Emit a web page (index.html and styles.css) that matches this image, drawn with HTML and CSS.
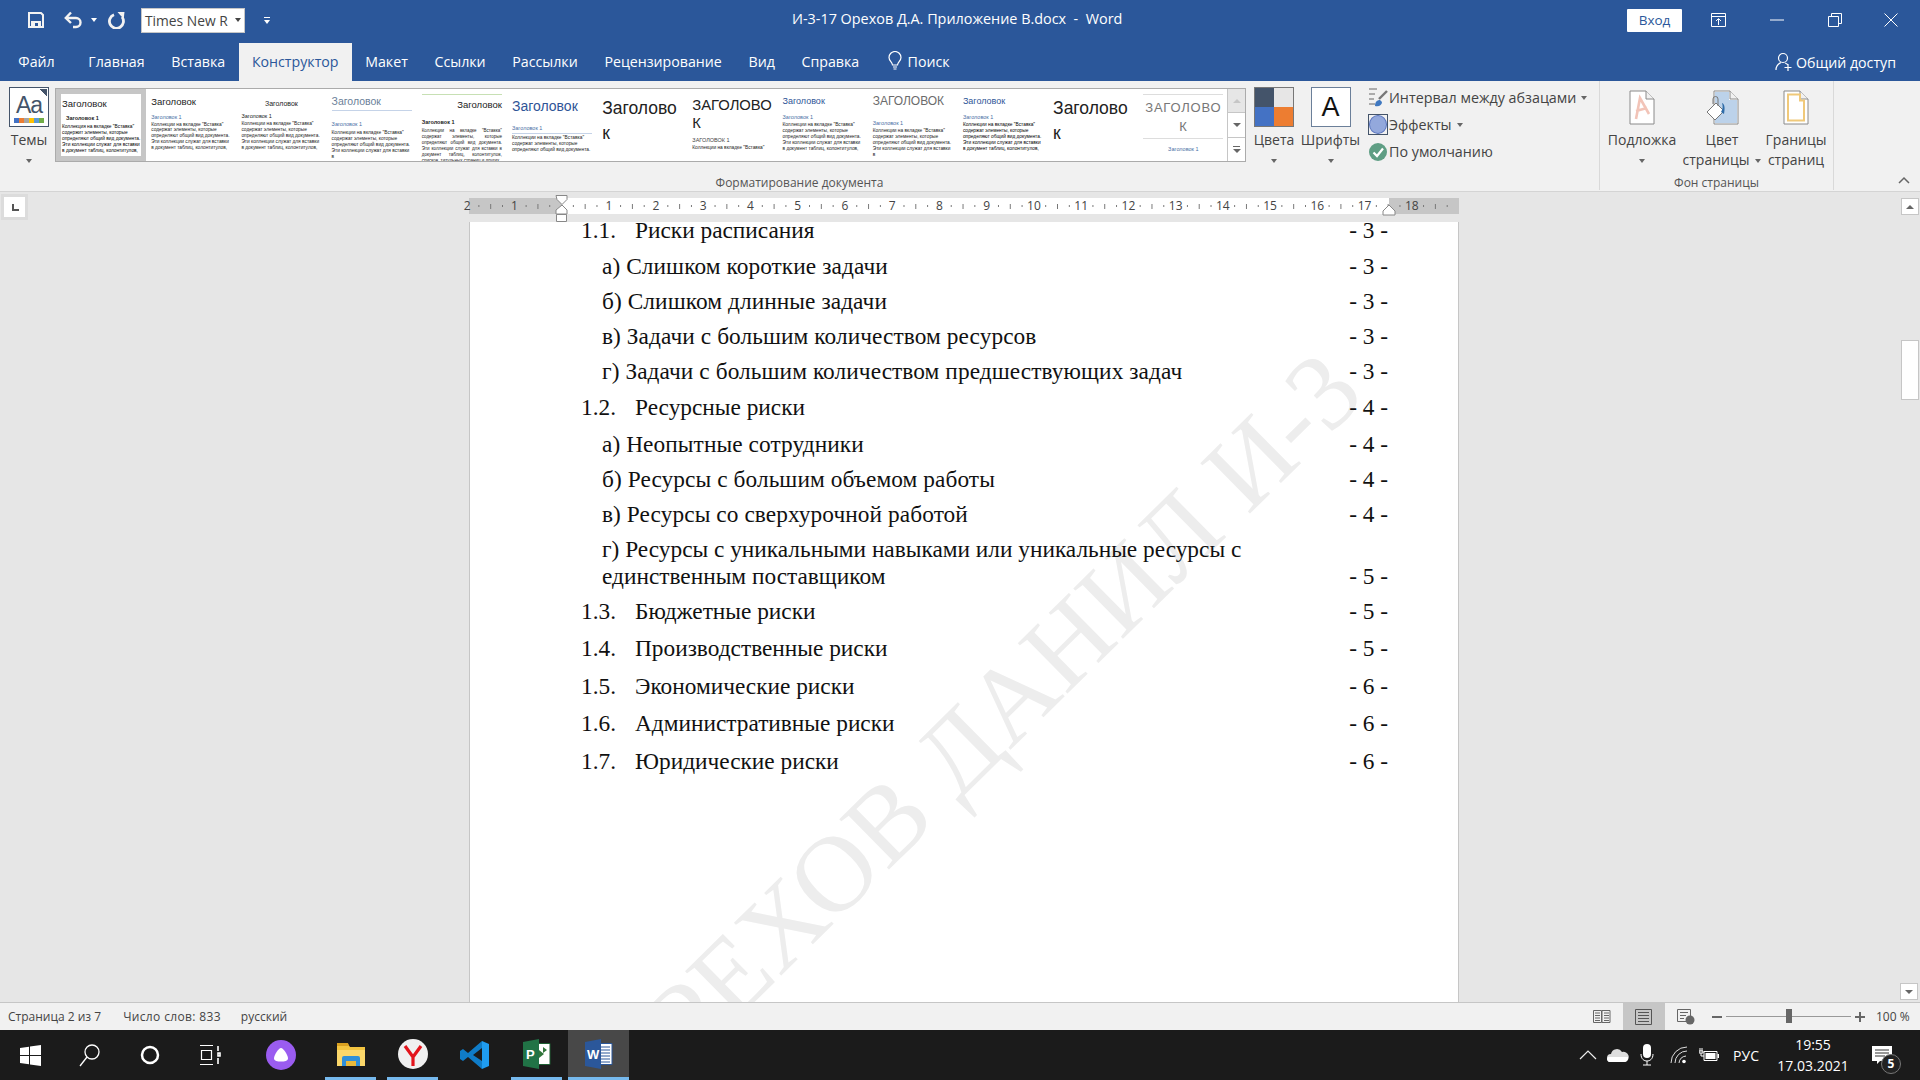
FILE: index.html
```html
<!DOCTYPE html>
<html lang="ru">
<head>
    <meta charset="UTF-8">
    <title>И-3-17 Орехов Д.А. Приложение В.docx - Word</title>
    <link rel="stylesheet" href="styles.css">
</head>
<body>
    <!-- title bar -->
    <div class="titlebar">
        <div class="qat">
            <svg class="qat-save" width="18" height="18" viewBox="0 0 18 18"><path d="M2 2h12l2 2v12H2z" fill="none" stroke="#f2f2f2" stroke-width="2"/><path d="M4 10h10v6H4z" fill="#f2f2f2"/><path d="M8 12h3v3H8z" fill="#2b579a"/></svg>
            <svg class="qat-undo" width="20" height="18" viewBox="0 0 20 18"><path d="M2.500 7H12a4.500 4.500 0 0 1 0 9H9" fill="none" stroke="#f2f2f2" stroke-width="2.4"/><path d="M7 1.500L1.800 7 7 12" fill="none" stroke="#f2f2f2" stroke-width="2.4"/></svg>
            <span class="caret caret-white qat-caret"></span>
            <svg class="qat-redo" width="18" height="18" viewBox="0 0 18 18"><path d="M6 3.700A7 7 0 1 0 14 6" fill="none" stroke="#f2f2f2" stroke-width="2.800"/><path d="M9.500 1h7l-.8 7z" fill="#f2f2f2"/></svg>
            <div class="font-combo"><span>Times New R</span><span class="caret caret-dark"></span></div>
            <svg class="qat-custom" width="9" height="9" viewBox="0 0 9 9"><path d="M1 1h6v1H1z M1 4h6L4 8z" fill="#fff"/></svg>
        </div>
        <div class="doc-title">И-3-17 Орехов Д.А. Приложение В.docx&nbsp; -&nbsp; Word</div>
        <div class="win-controls">
            <button class="login">Вход</button>
            <svg class="wc wc-ribbon" width="16" height="14" viewBox="0 0 16 14"><path d="M.5.500h14v13H.5z M.5 3.500h14 M7.500 12V6 M5 8l2.500-2.500L10 8" fill="none" stroke="#fff"/></svg>
            <svg class="wc wc-min" width="14" height="2" viewBox="0 0 14 2"><path d="M0 1h14" stroke="#fff"/></svg>
            <svg class="wc wc-max" width="14" height="14" viewBox="0 0 14 14"><path d="M.5 3.500h10v10H.5z M3.500 3.500v-3h10v10h-3" fill="none" stroke="#fff"/></svg>
            <svg class="wc wc-close" width="14" height="14" viewBox="0 0 14 14"><path d="M.5.500l13 13M13.500.500l-13 13" stroke="#fff"/></svg>
        </div>
    </div>

    <!-- tabs -->
    <div class="tabs">
        <span class="tab tab-file">Файл</span>
        <span class="tab">Главная</span>
        <span class="tab">Вставка</span>
        <span class="tab tab-active">Конструктор</span>
        <span class="tab">Макет</span>
        <span class="tab">Ссылки</span>
        <span class="tab">Рассылки</span>
        <span class="tab">Рецензирование</span>
        <span class="tab">Вид</span>
        <span class="tab">Справка</span>
        <span class="tab tab-search">
            <svg width="14" height="20" viewBox="0 0 14 20"><path d="M4.500 14c0-3-3.500-4-3.500-7.500a6 6 0 0 1 12 0C13 10 9.500 11 9.500 14z M5 16h4 M5.500 18h3" fill="none" stroke="#fff" stroke-width="1.200"/></svg>
            Поиск
        </span>
        <span class="share">
            <svg width="18" height="20" viewBox="0 0 18 20"><circle cx="8" cy="6" r="4.500" fill="none" stroke="#fff" stroke-width="1.200"/><path d="M1 18c0-4 2-6 5-7.500 M10 11c1 .3 2 1 2.500 1.500 M13 12v7 M9.500 15.500h7" fill="none" stroke="#fff" stroke-width="1.200"/></svg>
            Общий доступ
        </span>
    </div>

    <!-- ribbon -->
    <div class="ribbon">
        <div class="group group-format">
            <div class="group-body">
                <div class="big-btn themes-btn">
                    <div class="themes-icon">
                        <span class="themes-aa">Aa</span>
                        <span class="themes-colors"><i class="c1"></i><i class="c2"></i><i class="c3"></i><i class="c4"></i><i class="c5"></i><i class="c6"></i></span>
                    </div>
                    <span class="big-label">Темы</span>
                    <span class="caret caret-grey"></span>
                </div>
                <div class="gallery">
                    <div class="styles">
                        <div class="style style-selected s-plain">
                            <div class="s-head">Заголовок</div>
                            <div class="s-h1 s-bold">Заголовок 1</div>
                            <p class="s-body s-strong">Коллекция на вкладке "Вставка" содержит элементы, которые определяют общий вид документа. Эти коллекции служат для вставки в документ таблиц, колонтитулов,</p>
                        </div>
                        <div class="style s-blue1">
                            <div class="s-head">Заголовок</div>
                            <div class="s-h1">Заголовок 1</div>
                            <p class="s-body">Коллекции на вкладке "Вставка" содержат элементы, которые определяют общий вид документа. Эти коллекции служат для вставки в документ таблиц, колонтитулов,</p>
                        </div>
                        <div class="style s-center">
                            <div class="s-head">Заголовок</div>
                            <div class="s-h1">Заголовок 1</div>
                            <p class="s-body">Коллекции на вкладке "Вставка" содержат элементы, которые определяют общий вид документа. Эти коллекции служат для вставки в документ таблиц, колонтитулов,</p>
                        </div>
                        <div class="style s-rule">
                            <div class="s-head">Заголовок</div>
                            <div class="s-h1">Заголовок 1</div>
                            <p class="s-body">Коллекции на вкладке "Вставка" содержат элементы, которые определяют общий вид документа. Эти коллекции служат для вставки в</p>
                        </div>
                        <div class="style s-green">
                            <div class="s-head">Заголовок</div>
                            <div class="s-h1">Заголовок 1</div>
                            <p class="s-body">Коллекции на вкладке "Вставка" содержат элементы, которые определяют общий вид документа. Эти коллекции служат для вставки в документ таблиц, колонтитулов, списков, титульных страниц и других</p>
                        </div>
                        <div class="style s-bigblue">
                            <div class="s-head">Заголовок</div>
                            <div class="s-h1">Заголовок 1</div>
                            <p class="s-body">Коллекции на вкладке "Вставка" содержат элементы, которые определяют общий вид документа.</p>
                        </div>
                        <div class="style s-huge">
                            <div class="s-head">Заголовок</div>
                        </div>
                        <div class="style s-caps">
                            <div class="s-head">ЗАГОЛОВОК</div>
                            <div class="s-h1">ЗАГОЛОВОК 1</div>
                            <p class="s-body">Коллекции на вкладке "Вставка"</p>
                        </div>
                        <div class="style s-blue2">
                            <div class="s-head">Заголовок</div>
                            <div class="s-h1">Заголовок 1</div>
                            <p class="s-body">Коллекции на вкладке "Вставка" содержат элементы, которые определяют общий вид документа. Эти коллекции служат для вставки в документ таблиц, колонтитулов,</p>
                        </div>
                        <div class="style s-capsline">
                            <div class="s-head">ЗАГОЛОВОК</div>
                            <div class="s-h1">Заголовок 1</div>
                            <p class="s-body">Коллекции на вкладке "Вставка" содержат элементы, которые определяют общий вид документа. Эти коллекции служат для вставки в</p>
                        </div>
                        <div class="style s-blue2 s-dense">
                            <div class="s-head">Заголовок</div>
                            <div class="s-h1">Заголовок 1</div>
                            <p class="s-body">Коллекции на вкладке "Вставка" содержат элементы, которые определяют общий вид документа. Эти коллекции служат для вставки в документ таблиц, колонтитулов,</p>
                        </div>
                        <div class="style s-huge s-huge2">
                            <div class="s-head">Заголовок</div>
                        </div>
                        <div class="style s-boxed">
                            <div class="s-head">ЗАГОЛОВОК</div>
                            <div class="s-h1">Заголовок 1</div>
                        </div>
                    </div>
                    <div class="gallery-scroll">
                        <span class="gs gs-up"><i class="tri-up"></i></span>
                        <span class="gs gs-down"><i class="tri-down"></i></span>
                        <span class="gs gs-more"><b></b><i class="tri-down"></i></span>
                    </div>
                </div>
                <div class="big-btn colors-btn">
                    <div class="colors-icon"><i class="q1"></i><i class="q2"></i><i class="q3"></i><i class="q4"></i></div>
                    <span class="big-label">Цвета</span>
                    <span class="caret caret-grey"></span>
                </div>
                <div class="big-btn fonts-btn">
                    <div class="fonts-icon">A</div>
                    <span class="big-label">Шрифты</span>
                    <span class="caret caret-grey"></span>
                </div>
                <div class="mini-list">
                    <div class="mini-row">
                        <svg width="20" height="22" viewBox="0 0 20 22"><path d="M1 2h8M1 7h6M1 12h5M1 17h6" stroke="#666"/><path d="M19 4L11 12" stroke="#777" stroke-width="2.400"/><path d="M7 19c0-4 2-6 5-6l2 2c0 3-3 5-7 4z" fill="#3f78c0"/></svg>
                        <span>Интервал между абзацами</span><span class="caret caret-grey"></span>
                    </div>
                    <div class="mini-row">
                        <span class="effects-icon"><i></i></span>
                        <span>Эффекты</span><span class="caret caret-grey"></span>
                    </div>
                    <div class="mini-row">
                        <svg width="20" height="20" viewBox="0 0 20 20"><circle cx="10" cy="10" r="9" fill="#5f9e84"/><path d="M5.500 10.500l3.500 3.500 6-7.500" fill="none" stroke="#fff" stroke-width="2.200"/></svg>
                        <span>По умолчанию</span>
                    </div>
                </div>
            </div>
            <div class="group-label">Форматирование документа</div>
        </div>
        <div class="group group-page">
            <div class="group-body">
                <div class="page-btn btn-watermark">
                    <svg width="26" height="35" viewBox="0 0 26 35"><path d="M1 1h16l8 8v25H1z" fill="#fff" stroke="#8a8a8a"/><path d="M17 1v8h8" fill="#f1f1f1" stroke="#8a8a8a"/><path d="M7 29L11 8l9 16M7 21l11-3" fill="none" stroke="#f2c4b8" stroke-width="2.600"/></svg>
                    <span class="btn-text">Подложка</span>
                    <span class="caret caret-grey"></span>
                </div>
                <div class="page-btn btn-color">
                    <svg width="33" height="35" viewBox="0 0 33 35"><path d="M8 1h16l8 8v25H8z" fill="#fff" stroke="#8a8a8a"/><path d="M9 2h14v8h8v23H9z" fill="#bcd2ea"/><path d="M24 1v8h8" fill="#f1f1f1" stroke="#8a8a8a"/><path d="M1 22l9-9 8 8-9 9z" fill="#fff" stroke="#777"/><path d="M7 14V9a2.500 2.500 0 0 1 5 0v7" fill="none" stroke="#777"/><path d="M16 13c3 1 3 6 2 11l-3-2c2-3 2-6 1-9z" fill="#2f6ca8"/></svg>
                    <span class="btn-text">Цвет</span>
                    <span class="btn-text">страницы<span class="caret caret-grey caret-inline"></span></span>
                </div>
                <div class="page-btn btn-border">
                    <svg width="26" height="35" viewBox="0 0 26 35"><path d="M1 1h16l8 8v25H1z" fill="#fff" stroke="#8a8a8a"/><path d="M17 1v8h8" fill="#f1f1f1" stroke="#8a8a8a"/><path d="M5 4.500h12v6h4v20H5z" fill="none" stroke="#f0c97a" stroke-width="2"/></svg>
                    <span class="btn-text">Границы</span>
                    <span class="btn-text">страниц</span>
                </div>
            </div>
            <div class="group-label">Фон страницы</div>
        </div>
        <svg class="collapse" width="12" height="8" viewBox="0 0 12 8"><path d="M1 7l5-5 5 5" fill="none" stroke="#666" stroke-width="1.500"/></svg>
    </div>

    <!-- ruler -->
    <div class="ruler-row">
        <div class="tab-stop"><i></i></div>
        <div class="ruler">
            <div class="ruler-nums">
                <span>2</span><span>1</span><span></span><span>1</span><span>2</span><span>3</span><span>4</span><span>5</span><span>6</span><span>7</span><span>8</span><span>9</span><span>10</span><span>11</span><span>12</span><span>13</span><span>14</span><span>15</span><span>16</span><span>17</span><span>18</span>
            </div>
            <svg class="marker marker-left" width="14" height="28" viewBox="0 0 14 28"><path d="M1 .5h11v4l-5 5-5-5zM7 10l5 5v4H1v-4z" fill="#fff" stroke="#888"/><path d="M1.500 19.500h10v7h-10z" fill="#fff" stroke="#888"/></svg>
            <svg class="marker marker-right" width="14" height="12" viewBox="0 0 14 12"><path d="M7 1l6 6v4H1V7z" fill="#fff" stroke="#888"/></svg>
        </div>
        <div class="scroll-btn"><i class="tri-up"></i></div>
    </div>

    <!-- document -->
    <div class="workspace">
        <div class="page">
            <div class="watermark">ОРЕХОВ ДАНИЛ И-3</div>
            <div class="toc">
                <div class="row sec first"><span class="num">1.1.</span><span class="name">Риски расписания</span><span class="pg">- 3 -</span></div>
                <div class="row sub"><span class="name">а) Слишком короткие задачи</span><span class="pg">- 3 -</span></div>
                <div class="row sub"><span class="name">б) Слишком длинные задачи</span><span class="pg">- 3 -</span></div>
                <div class="row sub"><span class="name">в) Задачи с большим количеством ресурсов</span><span class="pg">- 3 -</span></div>
                <div class="row sub"><span class="name">г) Задачи с большим количеством предшествующих задач</span><span class="pg">- 3 -</span></div>
                <div class="row sec"><span class="num">1.2.</span><span class="name">Ресурсные риски</span><span class="pg">- 4 -</span></div>
                <div class="row sub"><span class="name">а) Неопытные сотрудники</span><span class="pg">- 4 -</span></div>
                <div class="row sub"><span class="name">б) Ресурсы с большим объемом работы</span><span class="pg">- 4 -</span></div>
                <div class="row sub"><span class="name">в) Ресурсы со сверхурочной работой</span><span class="pg">- 4 -</span></div>
                <div class="row sub row-wrap"><span class="name">г) Ресурсы с уникальными навыками или уникальные ресурсы с единственным поставщиком</span><span class="pg">- 5 -</span></div>
                <div class="row sec"><span class="num">1.3.</span><span class="name">Бюджетные риски</span><span class="pg">- 5 -</span></div>
                <div class="row sec"><span class="num">1.4.</span><span class="name">Производственные риски</span><span class="pg">- 5 -</span></div>
                <div class="row sec"><span class="num">1.5.</span><span class="name">Экономические риски</span><span class="pg">- 6 -</span></div>
                <div class="row sec"><span class="num">1.6.</span><span class="name">Административные риски</span><span class="pg">- 6 -</span></div>
                <div class="row sec"><span class="num">1.7.</span><span class="name">Юридические риски</span><span class="pg">- 6 -</span></div>
            </div>
        </div>
        <div class="vscroll">
            <div class="vthumb"></div>
            <div class="scroll-btn scroll-down"><i class="tri-down"></i></div>
        </div>
    </div>

    <!-- status bar -->
    <div class="statusbar">
        <span class="st-page">Страница 2 из 7</span>
        <span class="st-words">Число слов: 833</span>
        <span class="st-lang">русский</span>
        <div class="st-right">
            <span class="view">
                <svg width="18" height="16" viewBox="0 0 18 16"><path d="M.5 1.500h8v12h-8zM9 1.500h8v12H9zM2 4h5M2 6.500h5M2 9h5M2 11.500h5M11 4h5M11 6.500h5M11 9h5M11 11.500h5" fill="none" stroke="#666"/></svg>
            </span>
            <span class="view view-active">
                <svg width="18" height="16" viewBox="0 0 18 16"><path d="M.5.500h16v15H.5zM3 3.500h11M3 6.500h11M3 9.500h11M3 12.500h11" fill="none" stroke="#555"/></svg>
            </span>
            <span class="view">
                <svg width="18" height="16" viewBox="0 0 18 16"><path d="M.5.500h13v12H.5zM3 3.500h8M3 6.500h6M3 9.500h4" fill="none" stroke="#666"/><circle cx="13" cy="11" r="4.500" fill="#666"/></svg>
            </span>
            <span class="zoom-minus"></span>
            <div class="slider"><i></i></div>
            <span class="zoom-plus"></span>
            <span class="zoom-val">100 %</span>
        </div>
    </div>

    <!-- taskbar -->
    <div class="taskbar">
        <div class="task task-sys">
            <svg width="21" height="21" viewBox="0 0 21 21"><path d="M0 3l9-1.300V10H0zM10 1.500L21 0v10H10zM0 11h9v8.300L0 18zM10 11h11v10l-11-1.500z" fill="#fff"/></svg>
        </div>
        <div class="task task-sys">
            <svg width="22" height="24" viewBox="0 0 22 24"><circle cx="13" cy="9" r="7" fill="none" stroke="#fff" stroke-width="1.300"/><path d="M8 14L1 23" stroke="#fff" stroke-width="1.300"/></svg>
        </div>
        <div class="task task-sys">
            <svg width="20" height="20" viewBox="0 0 20 20"><circle cx="10" cy="10" r="8" fill="none" stroke="#fff" stroke-width="2.500"/></svg>
        </div>
        <div class="task task-sys">
            <svg width="22" height="20" viewBox="0 0 22 20"><path d="M1 .5h13M2.500 5.500h10v9h-10zM1 19.500h13" fill="none" stroke="#fff" stroke-width="1.200"/><path d="M19 1v5M19 8h2v3h-2zM19 13v6" fill="none" stroke="#fff" stroke-width="1.600"/></svg>
        </div>
        <div class="task task-alice">
            <svg width="30" height="30" viewBox="0 0 30 30"><circle cx="15" cy="15" r="15" fill="#9a5cf0"/><path d="M15 8c2.500 0 7 7 7 10.500 0 2.500-3.500 3-7 3s-7-.5-7-3C8 15 12.500 8 15 8z" fill="#fff"/></svg>
        </div>
        <div class="task task-open task-explorer">
            <svg width="28" height="24" viewBox="0 0 28 24"><path d="M0 2h11l2 3h15v19H0z" fill="#f3c440"/><path d="M0 1h11l1 3H0z" fill="#d9a020"/><path d="M0 8h28v16H0z" fill="#fbd76a"/><path d="M5 24v-8q0-2 2-2h14q2 0 2 2v8h-4v-5H9v5z" fill="#2f8fd8"/><path d="M9 19h10v5H9z" fill="#e8b93a"/></svg>
        </div>
        <div class="task task-open">
            <svg width="30" height="30" viewBox="0 0 30 30"><circle cx="15" cy="15" r="15" fill="#f0f0f0"/><path d="M7 7l8 11 8-11M15 18v9" fill="none" stroke="#e3141c" stroke-width="3.200"/></svg>
        </div>
        <div class="task">
            <svg width="30" height="30" viewBox="0 0 30 30"><path d="M22 1L8 13 3 9 0 11v8l3 2 5-4 14 12v-8L13 15l9-7z" fill="#0f7cc8"/><path d="M22 1l7 3v22l-7 3z" fill="#1f9cf0"/></svg>
        </div>
        <div class="task task-open">
            <svg width="28" height="30" viewBox="0 0 28 30"><path d="M12 4.500h15v21H12z" fill="#fff" stroke="#1e5f33"/><path d="M16 11l5 4-5 4zM20 8l4 3-4 3z" fill="#31753b"/><path d="M0 3l16-3v30L0 27z" fill="#217346"/><text x="3" y="20" class="ico-letter">P</text></svg>
        </div>
        <div class="task task-open task-active">
            <svg width="28" height="30" viewBox="0 0 28 30"><path d="M12 4.500h15v21H12z" fill="#fff" stroke="#2b579a"/><path d="M16 8h9M16 11h9M16 14h9M16 17h9M16 20h9M16 23h9" stroke="#2b579a"/><path d="M0 3l16-3v30L0 27z" fill="#2b579a"/><text x="2" y="20" class="ico-letter">W</text></svg>
        </div>
        <div class="tray">
            <svg class="tr-chev" width="18" height="10" viewBox="0 0 18 10"><path d="M1 9l8-8 8 8" fill="none" stroke="#eee" stroke-width="1.200"/></svg>
            <svg class="tr-cloud" width="22" height="14" viewBox="0 0 22 14"><path d="M4 14a4 4 0 0 1 0-8 6 6 0 0 1 11-2 5 5 0 0 1 3 10z" fill="#ddd"/><path d="M1 9h20v1a4 4 0 0 1-4 4H4a3 3 0 0 1-3-5z" fill="#fff"/></svg>
            <svg class="tr-mic" width="14" height="22" viewBox="0 0 14 22"><rect x="3" y="0" width="8" height="14" rx="4" fill="#fff"/><path d="M1 10c0 5 3 7 6 7s6-2 6-7M7 17v4M3 21h8" fill="none" stroke="#fff"/></svg>
            <svg class="tr-wifi" width="18" height="18" viewBox="0 0 18 18"><path d="M1 17A16 16 0 0 1 17 1M5 17A12 12 0 0 1 17 5M9 17a8 8 0 0 1 7-7" fill="none" stroke="#ddd"/><circle cx="14" cy="15.500" r="1.800" fill="#fff"/></svg>
            <svg class="tr-batt" width="20" height="14" viewBox="0 0 20 14"><path d="M5 3.500h13v9H5z" fill="none" stroke="#fff"/><path d="M6.500 5h10v6h-10zM18.500 6h1.500v4h-1.500z" fill="#fff"/><path d="M1 0v3M3 0v3M0 3h4v2H0zM2 5v3h3" fill="none" stroke="#fff"/></svg>
            <span class="tr-lang">РУС</span>
            <div class="tr-clock"><span>19:55</span><span>17.03.2021</span></div>
            <div class="tr-notif">
                <svg width="20" height="18" viewBox="0 0 20 18"><path d="M0 0h20v15H8l-3 3v-3H0z" fill="#fff"/><path d="M3 4h14M3 7h14M3 10h10" stroke="#333"/></svg>
                <span class="badge">5</span>
            </div>
        </div>
    </div>
</body>
</html>
```
FILE: styles.css
```css
* {
    box-sizing: border-box;
}

html, body {
    margin: 0;
    padding: 0;
}

body {
    width: 1920px;
    height: 1080px;
    overflow: hidden;
    display: flex;
    flex-direction: column;
    font-family: 'Open Sans', sans-serif;
    background-color: #e6e6e6;
}

/* carets */
.caret {
    display: inline-block;
    width: 0;
    height: 0;
    border-left: 3.5px solid transparent;
    border-right: 3.5px solid transparent;
    border-top: 4px solid #666;
}

.caret-white { border-top-color: #fff; }
.caret-dark { border-top-color: #444; }
.caret-inline { margin-left: 6px; vertical-align: middle; }

/* title bar */
.titlebar {
    height: 43px;
    flex: none;
    display: flex;
    align-items: center;
    padding-bottom: 3px;
    background-color: #2b579a;
    color: #fff;
    position: relative;
}

.qat {
    display: flex;
    align-items: center;
    padding-left: 27px;
}

.qat-undo { margin-left: 19px; }
.qat-caret { margin-left: 7px; }
.qat-redo { margin-left: 11px; }

.font-combo {
    width: 104px;
    height: 25px;
    margin-left: 15px;
    padding: 0 3px;
    display: flex;
    align-items: center;
    justify-content: space-between;
    background-color: #fff;
    border: 1px solid #c6c6c6;
    color: #444;
    font-size: 13.8px;
    white-space: nowrap;
}

.qat-custom { margin-left: 18px; }

.doc-title {
    position: absolute;
    left: 792px;
    top: 9px;
    font-size: 14.4px;
    white-space: nowrap;
}

.win-controls {
    margin-left: auto;
    display: flex;
    align-items: center;
}

.login {
    width: 55px;
    height: 23px;
    padding: 0;
    border: none;
    border-radius: 1px;
    background-color: #fff;
    color: #2b579a;
    font-family: inherit;
    font-size: 13.5px;
}

.wc-ribbon { margin-left: 29px; }
.wc-min { margin-left: 43px; }
.wc-max { margin-left: 44px; }
.wc-close { margin-left: 42px; margin-right: 22px; }

/* tabs */
.tabs {
    height: 38px;
    flex: none;
    display: flex;
    align-items: stretch;
    padding-left: 5px;
    background-color: #2b579a;
    color: #fff;
    font-size: 14.2px;
}

.tab {
    padding: 0 13.350px 2px;
    display: flex;
    align-items: center;
    gap: 6px;
    white-space: nowrap;
}

.tab-file { margin-right: 7px; }

.tab-active {
    background-color: #f1f1f1;
    color: #2b579a;
}

.tab-search { padding-left: 15px; }

.share {
    margin-left: auto;
    padding-right: 24px;
    display: flex;
    align-items: center;
    gap: 3px;
}

/* ribbon */
.ribbon {
    height: 111px;
    flex: none;
    display: flex;
    position: relative;
    background-color: #f1f1f1;
    border-bottom: 1px solid #d4d4d4;
    color: #444;
}

.group {
    display: flex;
    flex-direction: column;
    border-right: 1px solid #d9d9d9;
    margin-bottom: 1px;
}

.group-format { width: 1600px; }
.group-page { width: 234px; }

.group-body {
    flex: 1;
    display: flex;
    min-height: 0;
}

.group-label {
    height: 15px;
    text-align: center;
    font-size: 12px;
    line-height: 15px;
    color: #555;
}

.big-btn {
    display: flex;
    flex-direction: column;
    align-items: center;
    padding-top: 6px;
}

.big-label {
    font-size: 14px;
    line-height: 19px;
    margin-top: 3px;
}

.big-btn .caret {
    margin-top: 10px;
}

.themes-btn {
    width: 55px;
    flex: none;
    padding-left: 3px;
}

.themes-icon {
    width: 40px;
    height: 40px;
    flex: none;
    border: 1px solid #44546a;
    outline: 1px solid #fff;
    outline-offset: -2px;
    background: linear-gradient(225deg, #44546a 0, #44546a 7px, #fff 7px);
    display: flex;
    flex-direction: column;
    align-items: center;
    font-family: 'Liberation Sans', sans-serif;
}

.themes-aa {
    font-size: 23px;
    line-height: 24px;
    letter-spacing: -1px;
    margin-top: 5px;
    color: #44546a;
}

.themes-colors {
    display: flex;
    margin-top: 1px;
}

.themes-colors i {
    width: 5px;
    height: 5px;
}

.c1 { background-color: #4472c4; }
.c2 { background-color: #ed7d31; }
.c3 { background-color: #a5a5a5; }
.c4 { background-color: #ffc000; }
.c5 { background-color: #5b9bd5; }
.c6 { background-color: #70ad47; }

.gallery {
    width: 1191px;
    height: 74px;
    margin-top: 7px;
    flex: none;
    display: flex;
    background-color: #fff;
    border: 1px solid #ababab;
}

.styles {
    flex: 1;
    display: flex;
    overflow: hidden;
}

.style {
    width: 90.200px;
    flex: none;
    height: 100%;
    padding: 5px 5px 0;
    overflow: hidden;
    font-family: 'Liberation Sans', sans-serif;
    color: #222;
}

.style-selected {
    background-color: #fff;
    border: 5px solid #c6c6c6;
    padding: 0 0 0 1px;
}

.s-head {
    font-size: 9.500px;
    line-height: 15px;
    white-space: nowrap;
}

.s-h1 {
    font-size: 5.500px;
    line-height: 8px;
    margin-top: 3.500px;
}

.s-body {
    margin: 1px 0 0;
    font-size: 4.800px;
    line-height: 5.900px;
}

.style-selected .s-head { margin-top: 1.500px; }
.style-selected .s-body { margin-top: 2px; }
.s-bold { font-weight: bold; margin-left: 4px; }
.s-strong { color: #000; }

.s-blue1 .s-h1 { color: #4a6fa5; }

.s-center .s-head { text-align: center; font-size: 7px; margin-top: 2px; }
.s-center .s-h1 { margin-top: 1px; }

.s-rule .s-head {
    color: #6b7f99;
    font-size: 10.500px;
    line-height: 15px;
    padding-bottom: 1px;
    border-bottom: 1px solid #c5d3e8;
}

.s-rule .s-h1 { margin-top: 9px; color: #4a6fa5; }
.s-rule .s-body { margin-top: 2px; }

.s-green .s-head {
    border-top: 1px solid #c7e0b4;
    text-align: right;
    padding-top: 2px;
}

.s-green .s-h1 { margin-top: 6px; font-weight: bold; }
.s-green .s-body { text-align: justify; margin-top: 2px; font-size: 4.500px; }

.s-bigblue .s-head {
    color: #2f5597;
    font-size: 14px;
    line-height: 20px;
    margin-top: 2px;
}

.s-bigblue .s-h1 {
    color: #4a6fa5;
    margin-top: 8px;
    padding-bottom: 1px;
    border-bottom: 1px solid #c5d3e8;
}

.s-huge .s-head {
    white-space: normal;
    word-break: break-all;
    font-size: 17.500px;
    line-height: 25px;
    margin-top: 1.500px;
}

.s-caps .s-head {
    white-space: normal;
    word-break: break-all;
    font-size: 14.800px;
    line-height: 18px;
    margin-top: 2px;
}

.s-caps .s-h1 { margin-top: 4px; color: #444; }
.s-caps .s-body { margin-top: 1px; }

.s-blue2 .s-head { color: #2f5597; font-size: 9px; }
.s-blue2 .s-h1 { color: #4a6fa5; margin-top: 4px; }
.s-dense .s-body { color: #000; }

.s-capsline .s-head {
    color: #6b6b6b;
    font-size: 12px;
    line-height: 15px;
}

.s-capsline .s-h1 { margin-top: 10px; color: #4a6fa5; }

.s-boxed .s-head {
    white-space: normal;
    word-break: break-all;
    border-top: 1px solid #ddd;
    border-bottom: 1px solid #ddd;
    text-align: center;
    color: #777;
    font-size: 13px;
    line-height: 19px;
    letter-spacing: .8px;
    padding: 3px 0 2px;
}

.s-boxed .s-h1 { text-align: center; color: #4a6fa5; margin-top: 6px; }

.gallery-scroll {
    width: 18px;
    flex: none;
    display: flex;
    flex-direction: column;
    border-left: 1px solid #c6c6c6;
}

.gs {
    flex: 1;
    display: flex;
    flex-direction: column;
    align-items: center;
    justify-content: center;
    gap: 2px;
    background-color: #fff;
    border-bottom: 1px solid #c6c6c6;
}

.gs:last-child { border-bottom: none; }
.gs-up { background-color: #e6e6e6; }
.gs-up .tri-up { border-bottom-color: #c6c6c6; }
.gs b { width: 7px; height: 1px; background-color: #666; }

.tri-up, .tri-down {
    display: block;
    width: 0;
    height: 0;
    border-left: 4px solid transparent;
    border-right: 4px solid transparent;
}

.tri-up { border-bottom: 4px solid #666; }
.tri-down { border-top: 4px solid #666; }

.colors-btn {
    width: 56px;
    flex: none;
}

.colors-icon {
    width: 40px;
    height: 40px;
    display: grid;
    grid-template-columns: 1fr 1fr;
    border: 1px solid #777;
}

.q1 { background-color: #44546a; }
.q2 { background-color: #e7e6e6; }
.q3 { background-color: #4472c4; }
.q4 { background-color: #ed7d31; }

.fonts-btn {
    width: 57px;
    flex: none;
}

.fonts-icon {
    width: 40px;
    height: 40px;
    background-color: #fff;
    border: 1px solid #6b7f99;
    text-align: center;
    font-family: 'Liberation Sans', sans-serif;
    font-size: 27px;
    line-height: 38px;
    color: #111;
}

.mini-list {
    padding: 3px 0 0 9px;
    display: flex;
    flex-direction: column;
    font-size: 14.300px;
}

.mini-row {
    height: 27px;
    display: flex;
    align-items: center;
    gap: 1px;
    white-space: nowrap;
}

.mini-row .caret { margin-left: 4px; }

.effects-icon {
    width: 20px;
    height: 21px;
    border: 1px solid #44546a;
    display: block;
}

.effects-icon i {
    display: block;
    width: 100%;
    height: 100%;
    border-radius: 50%;
    background-color: #93a8dc;
    border: 1px solid #5b76bf;
}

.page-btn {
    display: flex;
    flex-direction: column;
    align-items: center;
    padding-top: 9px;
    flex: none;
}

.btn-watermark { width: 84px; }
.btn-color { width: 76px; }
.btn-border { width: 72px; }

.page-btn svg { margin-bottom: 5px; }

.btn-text {
    font-size: 14px;
    line-height: 20px;
    white-space: nowrap;
}

.btn-watermark .caret { margin-top: 9px; }

.collapse {
    position: absolute;
    right: 10px;
    bottom: 7px;
}

/* ruler */
.ruler-row {
    height: 30px;
    flex: none;
    display: flex;
    align-items: flex-start;
    padding-top: 6px;
    background-color: #e6e6e6;
}

.tab-stop {
    width: 21px;
    height: 20px;
    margin-left: 4px;
    margin-top: -1px;
    background-color: #fff;
    position: relative;
    outline: 3px solid #dcdcdc;
}

.tab-stop i {
    display: block;
    width: 7px;
    height: 7px;
    margin: 7px 0 0 8px;
    border-left: 2px solid #555;
    border-bottom: 2px solid #555;
}

.ruler {
    width: 990px;
    height: 16px;
    margin-left: 444px;
    position: relative;
    background-image:
        linear-gradient(90deg, transparent 23.100px, #777 23.100px, #777 24.100px, transparent 24.100px),
        linear-gradient(90deg, transparent 11.300px, #777 11.300px, #777 12.300px, transparent 12.300px, transparent 34.900px, #777 34.900px, #777 35.900px, transparent 35.900px),
        linear-gradient(90deg, #c6c6c6 0, #c6c6c6 93px, #fff 93px, #fff 920px, #c6c6c6 920px);
    background-size: 47.240px 5px, 47.240px 2px, 100% 100%;
    background-position: 45.800px center, 45.800px center, 0 0;
    background-repeat: repeat-x, repeat-x, no-repeat;
}

.ruler-nums {
    display: flex;
    margin-left: -25.500px;
    font-size: 12px;
    line-height: 16px;
    color: #444;
}

.ruler-nums span {
    width: 47.240px;
    flex: none;
    text-align: center;
}

.marker {
    position: absolute;
}

.marker-left { left: 86px; top: -3px; }
.marker-right { left: 913px; top: 6px; }

.scroll-btn {
    width: 18px;
    height: 17px;
    margin-left: auto;
    margin-right: 1px;
    background-color: #fff;
    border: 1px solid #c6c6c6;
    display: flex;
    align-items: center;
    justify-content: center;
}

/* document */
.workspace {
    flex: 1;
    min-height: 0;
    display: flex;
    position: relative;
    background-color: #e6e6e6;
}

.page {
    width: 990px;
    margin-left: 469px;
    position: relative;
    overflow: hidden;
    background-color: #fff;
    border-left: 1px solid #c6c6c6;
    border-right: 1px solid #c6c6c6;
}

.watermark {
    position: absolute;
    left: 139px;
    top: 819px;
    font-family: 'Liberation Serif', serif;
    font-size: 108px;
    line-height: 1;
    color: #ededed;
    white-space: nowrap;
    transform: rotate(-44.600deg);
    transform-origin: 0 50%;
}

.toc {
    position: relative;
    padding: 0 70px 0 111px;
    font-family: 'Liberation Serif', serif;
    font-size: 23.330px;
    line-height: 27px;
    color: #111;
}

.row {
    display: flex;
    align-items: flex-end;
}

.sec { margin-top: 10.600px; }
.sub { margin-top: 8px; padding-left: 21px; }
.sub .name { letter-spacing: .08px; }
.sec + .sub { margin-top: 9.500px; }
.sub + .sec { margin-top: 9px; }
.first { margin-top: -5.500px; }
.row-wrap { margin-bottom: -1px; }
.row-wrap .name { letter-spacing: 0; }

.num { width: 54px; flex: none; }
.name { flex: 1; }
.pg { flex: none; }

.vscroll {
    margin-left: auto;
    width: 20px;
    position: relative;
    padding: 118px 1px 0;
}

.vthumb {
    height: 60px;
    background-color: #fff;
    border: 1px solid #c6c6c6;
}

.scroll-down {
    position: absolute;
    right: 1px;
    bottom: 2px;
}

/* status bar */
.statusbar {
    height: 28px;
    flex: none;
    display: flex;
    align-items: center;
    padding-left: 8px;
    background-color: #f1f1f1;
    border-top: 1px solid #c6c6c6;
    font-size: 12px;
    color: #444;
}

.st-words { margin-left: 22px; letter-spacing: .35px; }
.st-lang { margin-left: 20px; }

.st-right {
    margin-left: auto;
    height: 100%;
    display: flex;
    align-items: center;
}

.view {
    width: 42px;
    height: 100%;
    display: flex;
    align-items: center;
    justify-content: center;
}

.view-active { background-color: #c6c6c6; }

.zoom-minus {
    width: 10px;
    height: 2px;
    margin-left: 5px;
    background-color: #666;
}

.slider {
    width: 125px;
    height: 1px;
    margin-left: 4px;
    background-color: #999;
    position: relative;
}

.slider i {
    position: absolute;
    left: 60px;
    top: -7px;
    width: 6px;
    height: 14px;
    background-color: #666;
}

.zoom-plus {
    width: 10px;
    height: 10px;
    margin-left: 4px;
    background:
        linear-gradient(#666, #666) center / 100% 2px no-repeat,
        linear-gradient(#666, #666) center / 2px 100% no-repeat;
}

.zoom-val {
    width: 55px;
    padding-left: 11px;
    white-space: nowrap;
}

/* taskbar */
.taskbar {
    height: 50px;
    flex: none;
    display: flex;
    background-color: #1b1b1b;
    color: #fff;
}

.task {
    height: 100%;
    display: flex;
    align-items: center;
    justify-content: center;
    flex: none;
    width: 51px;
    margin-right: 11px;
}

.task-sys {
    width: 60px;
    margin-right: 0;
}

.task-alice { margin-left: 15px; margin-right: 19px; }

.task-open { border-bottom: 3px solid #76b9ed; }

.task-active {
    width: 61px;
    margin-left: -5px;
    margin-right: 0;
    background-color: #484848;
}

.ico-letter {
    font-family: 'Liberation Sans', sans-serif;
    font-size: 13px;
    font-weight: bold;
    fill: #fff;
}

.tray {
    margin-left: auto;
    padding-right: 28px;
    display: flex;
    align-items: center;
    font-size: 14px;
}

.tr-chev { margin-right: 10px; }
.tr-cloud { margin-right: 11px; }
.tr-mic { margin-right: 16px; }
.tr-wifi { margin-right: 11px; }
.tr-batt { margin-right: 14px; }
.tr-lang { margin-right: 18px; }

.tr-clock {
    width: 72px;
    display: flex;
    flex-direction: column;
    align-items: center;
    line-height: 21px;
    white-space: nowrap;
}

.tr-notif {
    margin-left: 23px;
    position: relative;
    display: flex;
}

.badge {
    position: absolute;
    left: 9px;
    top: 8px;
    width: 20px;
    height: 20px;
    border-radius: 50%;
    border: 1px solid #777;
    background-color: #222;
    font-size: 12px;
    font-weight: bold;
    line-height: 18px;
    text-align: center;
}
```
